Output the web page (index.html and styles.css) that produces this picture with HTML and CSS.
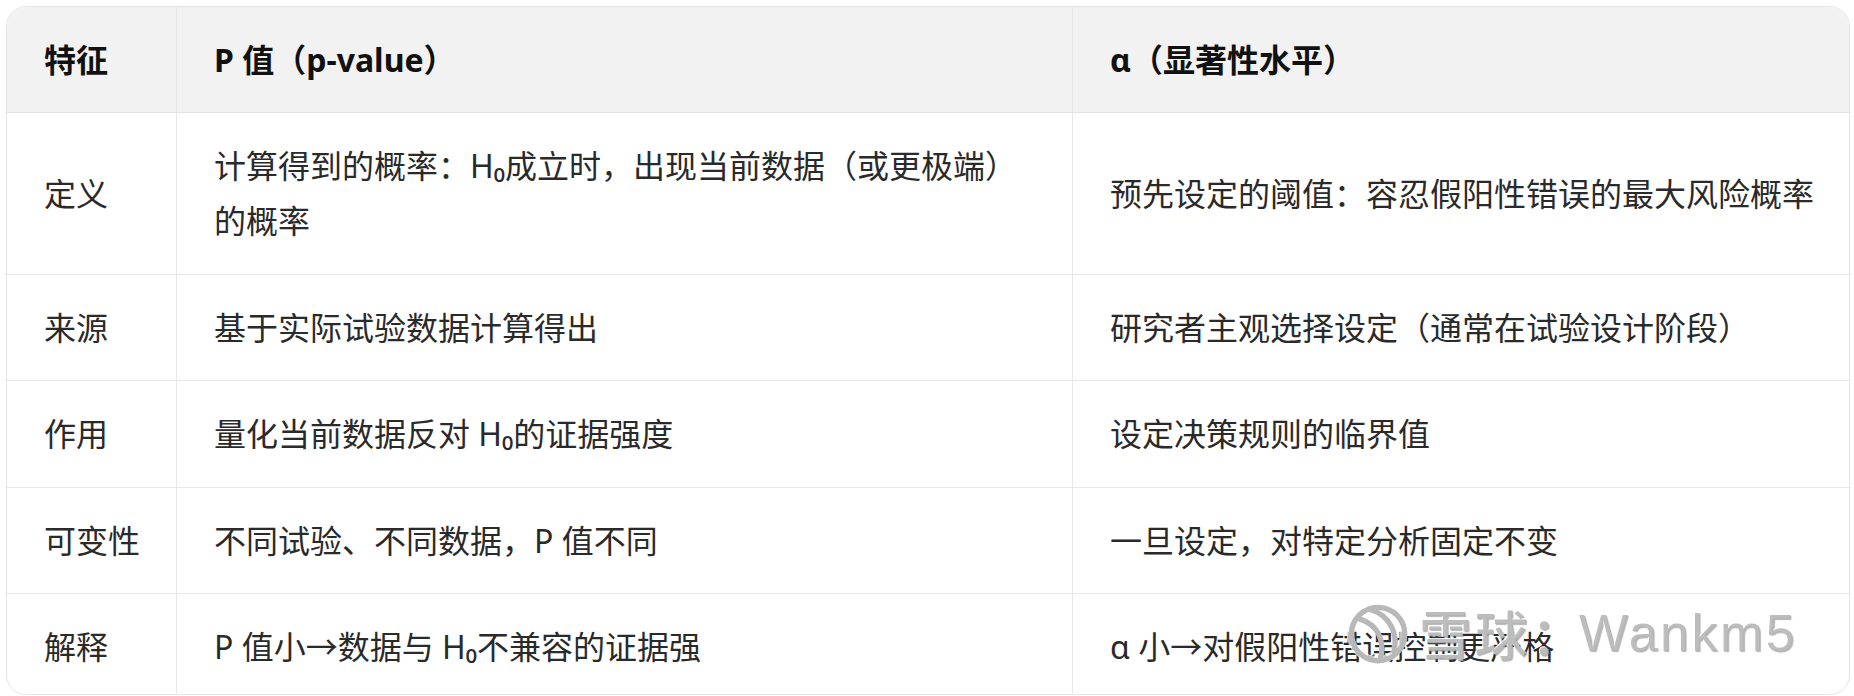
FILE: index.html
```html
<!DOCTYPE html>
<html lang="zh-CN">
<head>
<meta charset="utf-8">
<title>P 值与 α</title>
<link rel="stylesheet" href="styles.css">
</head>
<body>
<div class="page">
  <div class="card">
    <table class="cmp">
      <colgroup>
        <col class="c1">
        <col class="c2">
        <col class="c3">
      </colgroup>
      <thead>
        <tr>
          <th>特征</th>
          <th>P 值（p-value）</th>
          <th>α（显著性水平）</th>
        </tr>
      </thead>
      <tbody>
        <tr>
          <td>定义</td>
          <td>计算得到的概率：H₀成立时，出现当前数据（或更极端）的概率</td>
          <td>预先设定的阈值：容忍假阳性错误的最大风险概率</td>
        </tr>
        <tr>
          <td>来源</td>
          <td>基于实际试验数据计算得出</td>
          <td>研究者主观选择设定（通常在试验设计阶段）</td>
        </tr>
        <tr>
          <td>作用</td>
          <td>量化当前数据反对 H₀的证据强度</td>
          <td>设定决策规则的临界值</td>
        </tr>
        <tr>
          <td>可变性</td>
          <td>不同试验、不同数据，P 值不同</td>
          <td>一旦设定，对特定分析固定不变</td>
        </tr>
        <tr class="last">
          <td>解释</td>
          <td>P 值小→数据与 H₀不兼容的证据强</td>
          <td>α 小→对假阳性错误控制更严格</td>
        </tr>
      </tbody>
    </table>
  </div>

  <div class="watermark" aria-hidden="true">
    <svg class="wm-logo" width="64" height="64" viewBox="0 0 60 60">
      <g fill="none" stroke-linecap="round">
        <circle cx="30" cy="30" r="25" stroke="#fff" stroke-width="7" opacity="0.7"/>
        <circle cx="31" cy="31" r="25" stroke="#b8b8b8" stroke-width="5"/>
        <path d="M14 17 C 30 22, 38 36, 33 55" stroke="#b8b8b8" stroke-width="5"/>
        <path d="M24 8 C 42 14, 50 30, 46 47" stroke="#b8b8b8" stroke-width="5"/>
      </g>
    </svg>
    <span class="wm-cn">雪球：</span><span class="wm-en">Wankm5</span>
  </div>
</div>
</body>
</html>
```

FILE: styles.css
```css
html, body {
  margin: 0;
  padding: 0;
  background: #ffffff;
}

.page {
  position: relative;
  padding: 6px 4px 0 6px;
  height: 696px;
  box-sizing: border-box;
  overflow: hidden;
}

.card {
  border: 1px solid #e5e5e5;
  border-radius: 20px;
  overflow: hidden;
  background: #ffffff;
}

.cmp {
  width: 100%;
  table-layout: fixed;
  border-collapse: separate;
  border-spacing: 0;
  font-family: "Noto Sans", "Noto Sans CJK SC", sans-serif;
  font-size: 32px;
  line-height: 55px;
  color: #2a2a2a;
}

.c1 { width: 170px; }
.c2 { width: 896px; }
.c3 { width: auto; }

.cmp th,
.cmp td {
  text-align: left;
  vertical-align: middle;
  padding: 25.25px 34px 25.25px 37px;
  border-right: 1px solid #e7e7e7;
  border-bottom: 1px solid #e7e7e7;
}

.cmp th:last-child,
.cmp td:last-child {
  border-right: none;
}

.cmp th {
  background: #f2f2f2;
  color: #111111;
  font-weight: 700;
  padding-top: 25px;
  padding-bottom: 25px;
  border-bottom-color: #e3e3e3;
}

.cmp tr.last td {
  border-bottom: none;
  padding-bottom: 19.5px;
}

.watermark {
  position: absolute;
  left: 1345px;
  top: 601px;
  display: flex;
  align-items: center;
  gap: 8px;
  pointer-events: none;
  color: rgba(180, 180, 180, 0.88);
  text-shadow: -1px -1px 0 rgba(255, 255, 255, 0.9), 1px 1px 1px rgba(110, 110, 110, 0.5);
  line-height: 1;
}

.wm-logo {
  flex: none;
}

.wm-cn {
  font-family: "Noto Sans CJK SC", sans-serif;
  font-size: 53px;
  font-weight: 500;
  letter-spacing: 3px;
  margin-left: 2px;
}

.wm-en {
  font-family: "Liberation Sans", Arial, sans-serif;
  font-size: 52px;
  letter-spacing: 2.5px;
  margin-left: -16px;
}
```
